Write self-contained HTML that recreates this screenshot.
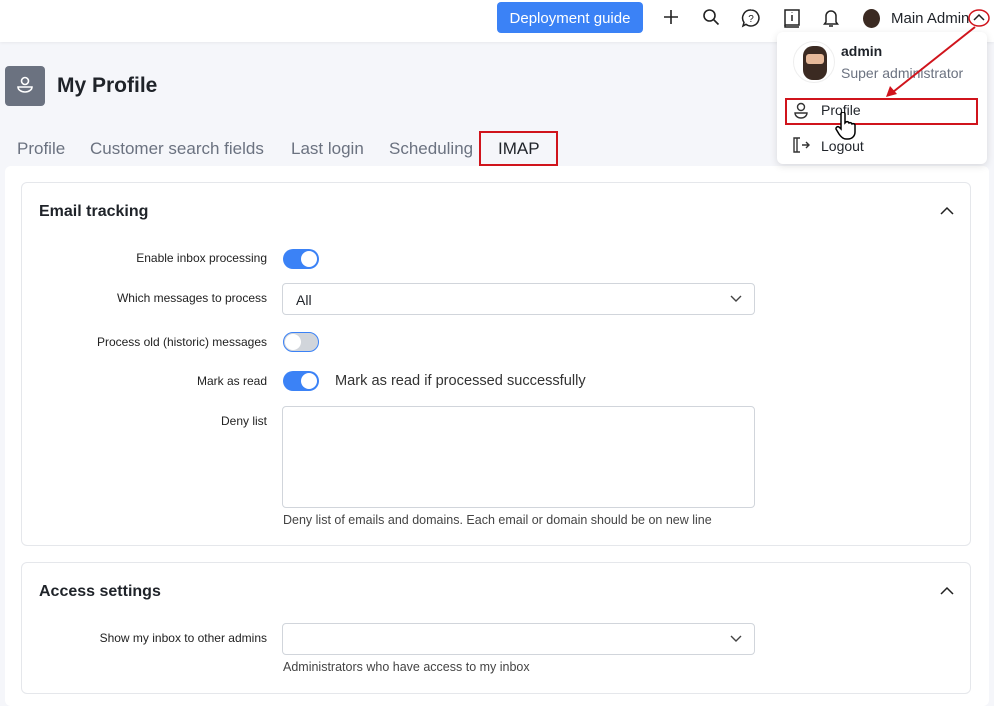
<!DOCTYPE html>
<html><head><meta charset="utf-8">
<style>
*{box-sizing:border-box;margin:0;padding:0}
body{width:994px;height:696px;overflow:hidden;background:#f5f6fa;font-family:"Liberation Sans",sans-serif;color:#1f2329;position:relative}
.top{position:absolute;left:0;top:0;width:994px;height:42px;background:#fff;box-shadow:0 1px 3px rgba(0,0,0,.06)}
.btn{position:absolute;left:497px;top:2px;width:146px;height:31px;background:#3b82f6;color:#fff;border-radius:4px;font-size:15px;line-height:33px;text-align:center}
.ic{position:absolute;top:8px}
.title{position:absolute;left:57px;top:74px;font-size:21px;font-weight:bold}
.avbox{position:absolute;left:5px;top:66px;width:40px;height:40px;background:#6b7280;border-radius:4px}
.tabs span{position:absolute;top:139px;font-size:17px;color:#6b7280}
.panel{position:absolute;left:5px;top:166px;width:984px;height:540px;background:#fff;border-radius:6px}
.card{position:absolute;left:21px;width:950px;background:#fff;border:1px solid #e5e7eb;border-radius:6px}
.h{position:absolute;left:17px;font-size:16px;font-weight:bold}
.lbl{position:absolute;font-size:12px;color:#222;text-align:right;width:245px;left:0}
.tg{position:absolute;width:36px;height:20px;border-radius:10px;background:#3b82f6}
.tg::after{content:"";position:absolute;right:2px;top:2px;width:16px;height:16px;border-radius:50%;background:#fff}
.tg.off{background:#d1d5db;border:1px solid #3b82f6}
.tg.off::after{left:1px;right:auto;top:1px}
.inp{position:absolute;width:473px;border:1px solid #d1d5db;border-radius:4px;background:#fff}
.hint{position:absolute;font-size:12.5px;color:#444}
.chev{position:absolute;right:12px;top:11px}
.dd{position:absolute;left:777px;top:32px;width:210px;height:132px;background:#fff;border-radius:6px;box-shadow:0 2px 8px rgba(0,0,0,.12)}
.red{position:absolute;border:2px solid #d0141c}
</style></head><body>
<div class="top">
<div class="btn">Deployment guide</div>
<svg class="ic" style="left:662px" width="18" height="18" viewBox="0 0 18 18" fill="none" stroke="#222" stroke-width="1.6"><path d="M9 2v14M2 9h14"/></svg>
<svg class="ic" style="left:702px" width="18" height="18" viewBox="0 0 18 18" fill="none" stroke="#222" stroke-width="1.6"><circle cx="7.5" cy="7.5" r="5.5"/><path d="M11.5 11.5l5 5"/></svg>
<svg class="ic" style="left:741px" width="20" height="20" viewBox="0 0 20 20" fill="none" stroke="#222" stroke-width="1.5"><path d="M10 2a8 8 0 1 1-5 14.3L2 18l1-3.5A8 8 0 0 1 10 2z"/><text x="10" y="14" font-size="10" text-anchor="middle" fill="#222" stroke="none" font-family="Liberation Sans">?</text></svg>
<svg class="ic" style="left:783px" width="18" height="20" viewBox="0 0 18 20" fill="none" stroke="#222" stroke-width="1.5"><rect x="2" y="2" width="14" height="15"/><path d="M2 17v2h14M9 7v6M9 4.5v.5"/></svg>
<svg class="ic" style="left:822px" width="18" height="20" viewBox="0 0 18 20" fill="none" stroke="#222" stroke-width="1.5"><path d="M4 14V8a5 5 0 0 1 10 0v6l1.5 2h-13zM7 18h4"/></svg>
<div style="position:absolute;left:863px;top:9px;width:17px;height:19px;border-radius:50%;background:#3b2a22"></div>
<div style="position:absolute;left:891px;top:10px;font-size:15px">Main Admin</div>
<svg style="position:absolute;left:968px;top:8px" width="22" height="20" viewBox="0 0 22 20" fill="none"><path d="M6 12l5-5 5 5" stroke="#222" stroke-width="1.5"/><ellipse cx="11" cy="10" rx="10" ry="8" stroke="#d0141c" stroke-width="1.5"/></svg>
</div>
<div class="avbox"><svg width="40" height="40" viewBox="0 0 40 40" fill="none" stroke="#fff" stroke-width="1.6"><circle cx="20" cy="15" r="3.5"/><path d="M13 21h14a7 5 0 0 1-14 0z"/></svg></div>
<div class="title">My Profile</div>
<div class="tabs"><span style="left:17px">Profile</span><span style="left:90px">Customer search fields</span><span style="left:291px">Last login</span><span style="left:389px">Scheduling</span><span style="left:498px;color:#1f2329">IMAP</span></div>
<div class="red" style="left:479px;top:131px;width:79px;height:35px"></div>
<div class="panel"></div>
<div class="card" style="top:182px;height:364px">
<div class="h" style="top:20px">Email tracking</div>
<svg style="position:absolute;right:16px;top:23px" width="14" height="9" viewBox="0 0 14 9" fill="none" stroke="#222" stroke-width="1.5"><path d="M1 8l6-6 6 6"/></svg>
<div class="lbl" style="top:68px">Enable inbox processing</div>
<div class="tg" style="top:66px;left:261px"></div>
<div class="lbl" style="top:108px">Which messages to process</div>
<div class="inp" style="top:100px;height:32px;left:260px"><span style="position:absolute;left:13px;top:8px;font-size:14px">All</span><svg class="chev" width="12" height="8" viewBox="0 0 12 8" fill="none" stroke="#444" stroke-width="1.4"><path d="M1 1l5 5 5-5"/></svg></div>
<div class="lbl" style="top:152px">Process old (historic) messages</div>
<div class="tg off" style="top:149px;left:261px"></div>
<div class="lbl" style="top:191px">Mark as read</div>
<div class="tg" style="top:188px;left:261px"></div>
<div style="position:absolute;left:313px;top:190px;font-size:14.6px;color:#333">Mark as read if processed successfully</div>
<div class="lbl" style="top:231px">Deny list</div>
<div class="inp" style="top:223px;height:102px;left:260px"></div>
<div class="hint" style="top:330px;left:261px">Deny list of emails and domains. Each email or domain should be on new line</div>
</div>
<div class="card" style="top:562px;height:132px">
<div class="h" style="top:20px">Access settings</div>
<svg style="position:absolute;right:16px;top:23px" width="14" height="9" viewBox="0 0 14 9" fill="none" stroke="#222" stroke-width="1.5"><path d="M1 8l6-6 6 6"/></svg>
<div class="lbl" style="top:68px">Show my inbox to other admins</div>
<div class="inp" style="top:60px;height:32px;left:260px"><svg class="chev" width="12" height="8" viewBox="0 0 12 8" fill="none" stroke="#444" stroke-width="1.4"><path d="M1 1l5 5 5-5"/></svg></div>
<div class="hint" style="top:97px;left:261px">Administrators who have access to my inbox</div>
</div>
<div class="dd">
<div style="position:absolute;left:16px;top:9px;width:42px;height:42px;border-radius:50%;background:#fff;border:1px solid #eee;overflow:hidden"><div style="position:absolute;left:9px;top:4px;width:24px;height:34px;border-radius:10px;background:#3b2a22"></div><div style="position:absolute;left:12px;top:12px;width:18px;height:10px;background:#e6b99a;border-radius:3px"></div></div>
<div style="position:absolute;left:64px;top:11px;font-size:14px;font-weight:bold">admin</div>
<div style="position:absolute;left:64px;top:33px;font-size:14px;color:#6b7280">Super administrator</div>
<svg style="position:absolute;left:16px;top:70px" width="16" height="18" viewBox="0 0 16 18" fill="none" stroke="#333" stroke-width="1.4"><circle cx="8" cy="5" r="3.5"/><path d="M2 11h12a6 5 0 0 1-12 0z"/></svg>
<div style="position:absolute;left:44px;top:70px;font-size:14px">Profile</div>
<svg style="position:absolute;left:15px;top:105px" width="18" height="16" viewBox="0 0 18 16" fill="none" stroke="#333" stroke-width="1.4"><path d="M8 1H2v14h6M5 1v14M10 8h7M14 5l3 3-3 3"/></svg>
<div style="position:absolute;left:44px;top:106px;font-size:14px">Logout</div>
</div>
<div class="red" style="left:785px;top:98px;width:193px;height:27px"></div>
<svg style="position:absolute;left:0;top:0" width="994" height="696"><path d="M975 27L893 92" stroke="#d0141c" stroke-width="2"/><path d="M886 97l4-11 7 8z" fill="#d0141c"/></svg>
<svg style="position:absolute;left:835px;top:112px" width="22" height="28" viewBox="0 0 22 28"><path d="M6 2a2 2 0 0 1 4 0v9l1-1a2 2 0 0 1 3 1 2 2 0 0 1 3 1 2 2 0 0 1 3 1v7c0 4-3 7-7 7h-2c-3 0-5-2-7-5l-3-5a2 2 0 0 1 3-2l2 2z" fill="#fff" stroke="#000" stroke-width="1.5"/></svg>
</body></html>
